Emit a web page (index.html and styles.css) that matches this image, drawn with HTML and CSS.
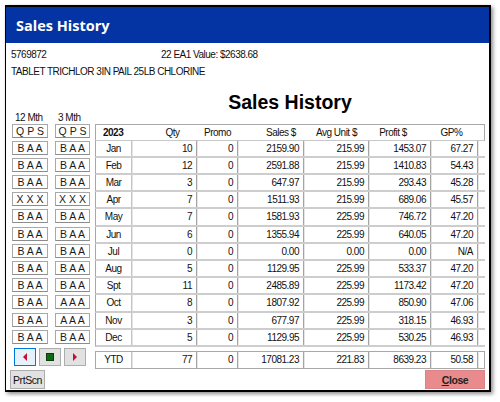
FILE: index.html
```html
<!DOCTYPE html>
<html>
<head>
<meta charset="utf-8">
<link rel="stylesheet" href="styles.css">
</head>
<body>
<div class="window">
  <div class="titlebar">Sales History</div>
  <div class="info"><span>5769872</span><span>22 EA1 Value: $2638.68</span></div>
  <div class="desc">TABLET TRICHLOR 3IN PAIL 25LB CHLORINE</div>
  <div class="main">
    <div class="left">
      <div class="labels"><span class="lab1">12 Mth</span><span class="lab2">3 Mth</span></div>
      <div class="codes">
        <div class="code-col c1">
          <div class="code">Q P S</div>
          <div class="code">B A A</div>
          <div class="code">B A A</div>
          <div class="code">B A A</div>
          <div class="code">X X X</div>
          <div class="code">B A A</div>
          <div class="code">B A A</div>
          <div class="code">B A A</div>
          <div class="code">B A A</div>
          <div class="code">B A A</div>
          <div class="code">B A A</div>
          <div class="code">B A A</div>
          <div class="code">B A A</div>
        </div>
        <div class="code-col c2">
          <div class="code">Q P S</div>
          <div class="code">B A A</div>
          <div class="code">B A A</div>
          <div class="code">B A A</div>
          <div class="code">X X X</div>
          <div class="code">B A A</div>
          <div class="code">B A A</div>
          <div class="code">B A A</div>
          <div class="code">B A A</div>
          <div class="code">B A A</div>
          <div class="code">A A A</div>
          <div class="code">A A A</div>
          <div class="code">B A A</div>
        </div>
      </div>
      <div class="nav">
        <button class="navbtn active"><svg width="6" height="8" viewBox="0 0 6 8"><polygon points="5,0 5,8 1,4" fill="#c8102e"/></svg></button>
        <button class="navbtn"><svg width="8" height="8" viewBox="0 0 8 8"><rect x="0.5" y="0.5" width="7" height="7" fill="#0b6b10" stroke="#0a3d0a"/></svg></button>
        <button class="navbtn"><svg width="6" height="8" viewBox="0 0 6 8"><polygon points="1,0 1,8 5,4" fill="#c8102e"/></svg></button>
      </div>
    </div>
    <div class="right">
      <h1 class="heading">Sales History</h1>
      <div class="table">
        <div class="row head">
          <span class="year">2023</span><span class="h-qty">Qty</span><span class="h-promo">Promo</span><span class="h-sales">Sales $</span><span class="h-avg">Avg Unit $</span><span class="h-profit">Profit $</span><span class="h-gp">GP%</span><span></span>
        </div>
        <div class="row body"><span class="m">Jan</span><span>10</span><span>0</span><span>2159.90</span><span>215.99</span><span>1453.07</span><span>67.27</span><span class="pad"></span></div>
        <div class="row body"><span class="m">Feb</span><span>12</span><span>0</span><span>2591.88</span><span>215.99</span><span>1410.83</span><span>54.43</span><span class="pad"></span></div>
        <div class="row body"><span class="m">Mar</span><span>3</span><span>0</span><span>647.97</span><span>215.99</span><span>293.43</span><span>45.28</span><span class="pad"></span></div>
        <div class="row body"><span class="m">Apr</span><span>7</span><span>0</span><span>1511.93</span><span>215.99</span><span>689.06</span><span>45.57</span><span class="pad"></span></div>
        <div class="row body"><span class="m">May</span><span>7</span><span>0</span><span>1581.93</span><span>225.99</span><span>746.72</span><span>47.20</span><span class="pad"></span></div>
        <div class="row body"><span class="m">Jun</span><span>6</span><span>0</span><span>1355.94</span><span>225.99</span><span>640.05</span><span>47.20</span><span class="pad"></span></div>
        <div class="row body"><span class="m">Jul</span><span>0</span><span>0</span><span>0.00</span><span>0.00</span><span>0.00</span><span>N/A</span><span class="pad"></span></div>
        <div class="row body"><span class="m">Aug</span><span>5</span><span>0</span><span>1129.95</span><span>225.99</span><span>533.37</span><span>47.20</span><span class="pad"></span></div>
        <div class="row body"><span class="m">Spt</span><span>11</span><span>0</span><span>2485.89</span><span>225.99</span><span>1173.42</span><span>47.20</span><span class="pad"></span></div>
        <div class="row body"><span class="m">Oct</span><span>8</span><span>0</span><span>1807.92</span><span>225.99</span><span>850.90</span><span>47.06</span><span class="pad"></span></div>
        <div class="row body"><span class="m">Nov</span><span>3</span><span>0</span><span>677.97</span><span>225.99</span><span>318.15</span><span>46.93</span><span class="pad"></span></div>
        <div class="row body"><span class="m">Dec</span><span>5</span><span>0</span><span>1129.95</span><span>225.99</span><span>530.25</span><span>46.93</span><span class="pad"></span></div>
      </div>
      <div class="row body ytd"><span class="m">YTD</span><span>77</span><span>0</span><span>17081.23</span><span>221.83</span><span>8639.23</span><span>50.58</span><span class="pad"></span></div>
    </div>
  </div>
  <div class="footer">
    <button class="btn prt">PrtScn</button>
    <button class="btn close"><u>C</u>lose</button>
  </div>
</div>
</body>
</html>
```

FILE: styles.css
```css
body {
  margin: 0;
  padding: 5px;
  background: #fff;
  color: #111;
  font-family: "Liberation Sans", Arial, sans-serif;
  font-size: 10px;
  letter-spacing: -0.5px;
}

.window {
  width: 486px;
  height: 387px;
  box-sizing: border-box;
  border: 1px solid #000;
  border-top-width: 2px;
  border-right-width: 2px;
  border-bottom-width: 2px;
  box-shadow: 2px 2px 4px rgba(0, 0, 0, 0.45);
  display: flex;
  flex-direction: column;
  background: #fff;
}

.titlebar {
  height: 36px;
  flex: none;
  background: #0433a3;
  color: #fff;
  font-family: "Open Sans", sans-serif;
  font-weight: bold;
  font-size: 14.5px;
  letter-spacing: 0;
  display: flex;
  align-items: center;
  padding-left: 10px;
}

.info {
  display: grid;
  grid-template-columns: 150px auto;
  padding: 5px 0 0 5px;
  line-height: 14px;
}

.desc {
  padding: 3px 0 0 5px;
  line-height: 14px;
}

.main {
  display: flex;
  margin-top: 9px;
  padding-left: 6px;
}

.left {
  width: 78px;
  flex: none;
}

.labels {
  padding-top: 23.5px;
  height: 12px;
  line-height: 12px;
  display: flex;
}

.lab1 {
  width: 40px;
  padding-left: 3px;
}

.lab2 {
  padding-left: 3px;
}

.codes {
  display: flex;
  gap: 7px;
}

.code-col {
  display: flex;
  flex-direction: column;
}

.c1 { width: 36px; }
.c2 { width: 35px; }

.code {
  height: 14px;
  margin-bottom: 3.2px;
  box-sizing: border-box;
  border: 1px solid #a8a8a8;
  border-bottom-color: #8c8c8c;
  line-height: 12px;
  text-align: center;
  font-size: 10.5px;
  color: #1a1a1a;
  letter-spacing: 0;
}

.nav {
  display: flex;
  gap: 3px;
  margin-left: 2px;
  margin-top: 1px;
}

.navbtn {
  width: 22px;
  height: 18px;
  padding: 0;
  border: 1px solid #adadad;
  background: #e1e1e1;
  display: flex;
  align-items: center;
  justify-content: center;
}

.navbtn.active {
  background: #e5f1fb;
  border-color: #0078d7;
}

.right {
  width: 390px;
  margin-left: 5px;
  flex: none;
}

.heading {
  margin: 0;
  height: 35.5px;
  line-height: 28px;
  text-align: center;
  font-family: "Liberation Sans", Arial, sans-serif;
  font-weight: bold;
  font-size: 19.5px;
  letter-spacing: 0;
  color: #000;
}

.row {
  display: grid;
  grid-template-columns: 36px 65px 41px 66px 65px 62px 47px 1fr;
  height: 17.2px;
  box-sizing: border-box;
  line-height: 15px;
}

.head {
  border: 1px solid #a8a8a8;
  border-bottom-color: #c8c8c8;
}

.head span {
  text-align: center;
}

.head .year {
  text-align: left;
  padding-left: 7px;
  font-weight: bold;
}

.head .h-qty { padding-left: 16px; }
.head .h-sales { padding-left: 20px; }
.head .h-profit { padding-right: 14px; }
.head .h-gp { padding-right: 6px; }

.body {
  border-left: 1px solid #a8a8a8;
  border-bottom: 2px solid #cdcdcd;
}

.body span {
  text-align: right;
  padding-right: 4px;
  border-right: 1px solid #a4a4a4;
  box-shadow: 1px 0 0 #e6e6e6;
}

.body .m {
  text-align: center;
  padding-right: 0;
  border-right-color: #c4c4c4;
}

.body .pad {
  border-right: none;
  box-shadow: none;
}

.ytd {
  margin-top: 4px;
  height: 18px;
  border: 1px solid #a8a8a8;
  line-height: 16px;
}

.footer {
  margin-top: auto;
  display: flex;
  justify-content: space-between;
  align-items: flex-end;
  padding: 0 4px 1px 4px;
}

.btn {
  height: 19px;
  padding: 0;
  font-family: inherit;
  font-size: 10.5px;
  letter-spacing: -0.4px;
  color: #111;
  border: 1px solid #adadad;
  background: #e1e1e1;
}

.prt {
  width: 35px;
}

.close {
  width: 60px;
  background: #e98b8d;
  border-color: #d98486;
  font-weight: bold;
  color: #222;
}
```
